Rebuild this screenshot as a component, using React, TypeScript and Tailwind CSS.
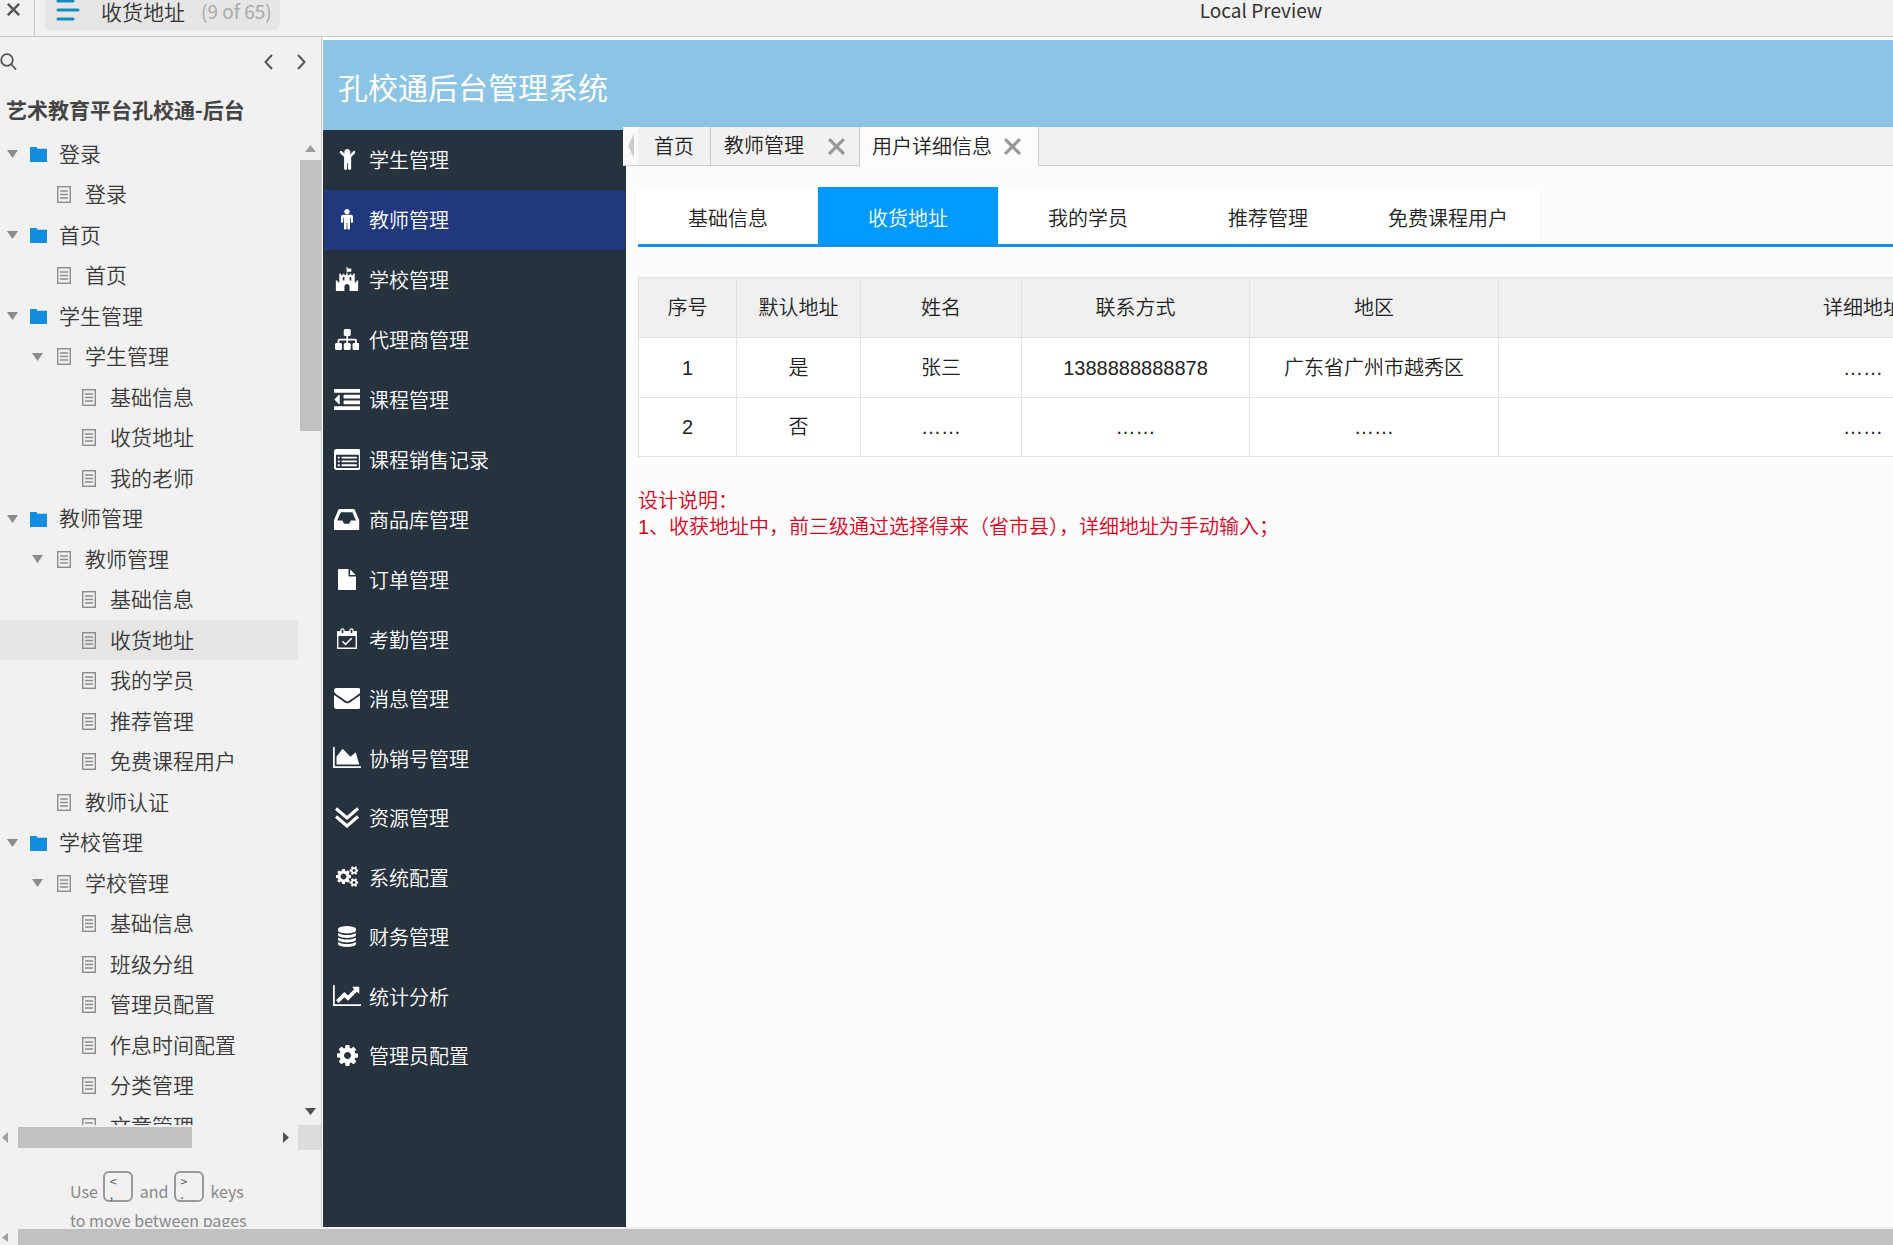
import type { ReactNode } from "react";
import { FaFortAwesome } from "react-icons/fa";

type TreeNode = {
  label: string;
  kind: "folder" | "page";
  level: 0 | 1 | 2;
  open?: boolean;
  active?: boolean;
};

const tree: TreeNode[] = [
  { label: "登录", kind: "folder", level: 0, open: true },
  { label: "登录", kind: "page", level: 1 },
  { label: "首页", kind: "folder", level: 0, open: true },
  { label: "首页", kind: "page", level: 1 },
  { label: "学生管理", kind: "folder", level: 0, open: true },
  { label: "学生管理", kind: "page", level: 1, open: true },
  { label: "基础信息", kind: "page", level: 2 },
  { label: "收货地址", kind: "page", level: 2 },
  { label: "我的老师", kind: "page", level: 2 },
  { label: "教师管理", kind: "folder", level: 0, open: true },
  { label: "教师管理", kind: "page", level: 1, open: true },
  { label: "基础信息", kind: "page", level: 2 },
  { label: "收货地址", kind: "page", level: 2, active: true },
  { label: "我的学员", kind: "page", level: 2 },
  { label: "推荐管理", kind: "page", level: 2 },
  { label: "免费课程用户", kind: "page", level: 2 },
  { label: "教师认证", kind: "page", level: 1 },
  { label: "学校管理", kind: "folder", level: 0, open: true },
  { label: "学校管理", kind: "page", level: 1, open: true },
  { label: "基础信息", kind: "page", level: 2 },
  { label: "班级分组", kind: "page", level: 2 },
  { label: "管理员配置", kind: "page", level: 2 },
  { label: "作息时间配置", kind: "page", level: 2 },
  { label: "分类管理", kind: "page", level: 2 },
  { label: "文章管理", kind: "page", level: 2 },
];

const indent = ["pl-[7px]", "pl-8", "pl-[57px]"];

function Glyph({ box, d }: { box: string; d: string }) {
  return (
    <svg viewBox={box} className="h-[21px] w-auto" fill="currentColor" aria-hidden="true">
      <path d={d} />
    </svg>
  );
}

const child =
  "M1468 452l-292 292v824q0 46-33 79t-79 33-79-33-33-79v-384h-64v384q0 46-33 79t-79 33-79-33-33-79v-824l-292-292q-28-28-28-68t28-68 68-28 68 28l228 228h368l228-228q28-28 68-28t68 28 28 68-28 68zm-348-68q0 93-65.5 158.5t-158.5 65.5-158.5-65.5-65.5-158.5 65.5-158.5 158.5-65.5 158.5 65.5 65.5 158.5z";
const male =
  "M1408 672v416q0 40-28 68t-68 28-68-28-28-68v-352h-64v912q0 46-33 79t-79 33-79-33-33-79v-464h-64v464q0 46-33 79t-79 33-79-33-33-79v-912h-64v352q0 40-28 68t-68 28-68-28-28-68v-416q0-80 56-136t136-56h640q80 0 136 56t56 136zm-288-448q0 93-65.5 158.5t-158.5 65.5-158.5-65.5-65.5-158.5 65.5-158.5 158.5-65.5 158.5 65.5 65.5 158.5z";
const sitemap =
  "M1792 1248v320q0 40-28 68t-68 28h-320q-40 0-68-28t-28-68v-320q0-40 28-68t68-28h96v-192h-512v192h96q40 0 68 28t28 68v320q0 40-28 68t-68 28h-320q-40 0-68-28t-28-68v-320q0-40 28-68t68-28h96v-192h-512v192h96q40 0 68 28t28 68v320q0 40-28 68t-68 28h-320q-40 0-68-28t-28-68v-320q0-40 28-68t68-28h96v-192q0-52 38-90t90-38h512v-192h-96q-40 0-68-28t-28-68v-320q0-40 28-68t68-28h320q40 0 68 28t28 68v320q0 40-28 68t-68 28h-96v192h512q52 0 90 38t38 90v192h96q40 0 68 28t28 68z";
const outdent =
  "M384 544v576q0 13-9.5 22.5t-22.5 9.5q-14 0-23-9l-288-288q-9-9-9-23t9-23l288-288q9-9 23-9 13 0 22.5 9.5t9.5 22.5zM32 1280h1728q32 0 32 32v192q0 32-32 32h-1728q-32 0-32-32v-192q0-32 32-32zM672 896h1088q32 0 32 32v192q0 32-32 32h-1088q-32 0-32-32v-192q0-32 32-32zM672 512h1088q32 0 32 32v192q0 32-32 32h-1088q-32 0-32-32v-192q0-32 32-32zM32 128h1728q32 0 32 32v192q0 32-32 32h-1728q-32 0-32-32v-192q0-32 32-32z";
const listAlt =
  "M256 1152h128v128h-128zM256 896h128v128h-128zM256 640h128v128h-128zM512 1152h1024v128h-1024zM512 896h1024v128h-1024zM512 640h1024v128h-1024zM1664 1376v-832q0-32-32-32h-1472q-32 0-32 32v832q0 32 32 32h1472q32 0 32-32zM1792 288v1088q0 66-47 113t-113 47h-1472q-66 0-113-47t-47-113v-1088q0-66 47-113t113-47h1472q66 0 113 47t47 113z";
const inbox =
  "M1151 960h316q-1-3-2.5-8.5t-2.5-7.5l-212-496h-708l-212 496q-1 3-2.5 8.5t-2.5 7.5h316l95 192h320zm513 30v482q0 26-19 45t-45 19h-1408q-26 0-45-19t-19-45v-482q0-62 25-123l238-552q10-25 36.5-42t52.5-17h832q26 0 52.5 17t36.5 42l238 552q25 61 25 123z";
const file =
  "M1152 512v-472q22 14 36 28l408 408q14 14 28 36h-472zm-128 32q0 40 28 68t68 28h544v1056q0 40-28 68t-68 28h-1344q-40 0-68-28t-28-68v-1600q0-40 28-68t68-28h800v544z";
const envelope =
  "M1792 710v794q0 66-47 113t-113 47h-1472q-66 0-113-47t-47-113v-794q44 49 101 87 362 246 497 345 57 42 92.5 65.5t94.5 48 110 24.5h2q51 0 110-24.5t94.5-48 92.5-65.5q170-123 498-345 57-39 100-87zm0-294q0 79-49 151t-122 123q-376 261-468 325-10 7-42.5 31t-54 38.5-52 32.5-57.5 27-50 9h-2q-23 0-50-9t-57.5-27-52-32.5-54-38.5-42.5-31q-91-64-262-182.5t-205-142.5q-62-42-117-115.5t-55-136.5q0-78 41.5-130t118.5-52h1472q65 0 112.5 47t47.5 113z";
const areaChart =
  "M2048 1536v128h-2048v-1536h128v1408h1920zm-384-1024l256 896h-1664v-576l448-576 576 576z";
const cogs =
  "M896 896q0-106-75-181t-181-75-181 75-75 181 75 181 181 75 181-75 75-181zm768 512q0-52-38-90t-90-38-90 38-38 90q0 53 37.5 90.5t90.5 37.5 90.5-37.5 37.5-90.5zm0-1024q0-52-38-90t-90-38-90 38-38 90q0 53 37.5 90.5t90.5 37.5 90.5-37.5 37.5-90.5zm-384 421v185q0 10-7 19.5t-16 10.5l-155 24q-11 35-32 76 34 48 90 115 7 11 7 20 0 12-7 19-23 30-82.5 89.5t-78.5 59.5q-11 0-21-7l-115-90q-37 19-77 31-11 108-23 155-7 24-30 24h-186q-11 0-20-7.5t-10-17.5l-23-153q-34-10-75-31l-118 89q-7 7-20 7-11 0-21-8-144-133-144-160 0-9 7-19 10-14 41-53t47-61q-23-44-35-82l-152-24q-10-1-17-9.5t-7-19.5v-185q0-10 7-19.5t16-10.5l155-24q11-35 32-76-34-48-90-115-7-11-7-20 0-12 7-20 22-30 82-89t79-59q11 0 21 7l115 90q34-18 77-32 11-108 23-154 7-24 30-24h186q11 0 20 7.5t10 17.5l23 153q34 10 75 31l118-89q8-7 20-7 11 0 21 8 144 133 144 160 0 8-7 19-12 16-42 54t-45 60q23 48 34 82l152 23q10 2 17 10.5t7 19.5zm640 533v140q0 16-149 31-12 27-30 52 51 113 51 138 0 4-4 7-122 71-124 71-8 0-46-47t-52-68q-20 2-30 2t-30-2q-14 21-52 68t-46 47q-2 0-124-71-4-3-4-7 0-25 51-138-18-25-30-52-149-15-149-31v-140q0-16 149-31 13-29 30-52-51-113-51-138 0-4 4-7 4-2 35-20t59-34 30-16q8 0 46 46.5t52 67.5q20-2 30-2t30 2q51-71 92-112l6-2q4 0 124 70 4 3 4 7 0 25-51 138 17 23 30 52 149 15 149 31zm0-1024v140q0 16-149 31-12 27-30 52 51 113 51 138 0 4-4 7-122 71-124 71-8 0-46-47t-52-68q-20 2-30 2t-30-2q-14 21-52 68t-46 47q-2 0-124-71-4-3-4-7 0-25 51-138-18-25-30-52-149-15-149-31v-140q0-16 149-31 13-29 30-52-51-113-51-138 0-4 4-7 4-2 35-20t59-34 30-16q8 0 46 46.5t52 67.5q20-2 30-2t30 2q51-71 92-112l6-2q4 0 124 70 4 3 4 7 0 25-51 138 17 23 30 52 149 15 149 31z";
const database =
  "M896 768q237 0 443-43t325-127v170q0 69-103 128t-280 93.5-385 34.5-385-34.5-280-93.5-103-128v-170q119 84 325 127t443 43zm0 768q237 0 443-43t325-127v170q0 69-103 128t-280 93.5-385 34.5-385-34.5-280-93.5-103-128v-170q119 84 325 127t443 43zm0-384q237 0 443-43t325-127v170q0 69-103 128t-280 93.5-385 34.5-385-34.5-280-93.5-103-128v-170q119 84 325 127t443 43zm0-1152q208 0 385 34.5t280 93.5 103 128v128q0 69-103 128t-280 93.5-385 34.5-385-34.5-280-93.5-103-128v-128q0-69 103-128t280-93.5 385-34.5z";
const lineChart =
  "M2048 1536v128h-2048v-1536h128v1408h1920zm-128-1248v435q0 21-19.5 29.5t-35.5-7.5l-121-121-633 633q-10 10-23 10t-23-10l-233-233-416 416-192-192 585-585q10-10 23-10t23 10l233 233 464-464-121-121q-16-16-7.5-35.5t29.5-19.5h435q14 0 23 9t9 23z";
const cog =
  "M1152 896q0-106-75-181t-181-75-181 75-75 181 75 181 181 75 181-75 75-181zm512-109v222q0 12-8 23t-20 13l-185 28q-19 54-39 91 35 50 107 138 10 12 10 25t-9 23q-27 37-99 108t-94 71q-12 0-26-9l-138-108q-44 23-91 38-16 136-29 186-7 28-36 28h-222q-14 0-24.5-8.5t-11.5-21.5l-28-184q-49-16-90-37l-141 107q-10 9-25 9-14 0-25-11-126-114-165-168-7-10-7-23 0-12 8-23 15-21 51-66.5t54-70.5q-27-50-41-99l-183-27q-13-2-21-12.5t-8-23.5v-222q0-12 8-23t19-13l186-28q14-46 39-92-40-57-107-138-10-12-10-24 0-10 9-23 26-36 98.5-107.5t94.5-71.5q13 0 26 10l138 107q44-23 91-38 16-136 29-186 7-28 36-28h222q14 0 24.5 8.5t11.5 21.5l28 184q49 16 90 37l142-107q9-9 24-9 13 0 25 10 129 119 165 170 7 8 7 22 0 12-8 23-15 21-51 66.5t-54 70.5q26 50 41 98l183 28q13 2 21 12.5t8 23.5z";

function CalendarCheck() {
  return (
    <svg viewBox="0 0 20 21" className="h-[21px] w-5" fill="none" stroke="currentColor" aria-hidden="true">
      <path d="M0 3h20v5H0z" fill="currentColor" stroke="none" />
      <path d="M.7 4v16.3h18.6V4" strokeWidth="1.4" />
      <rect x="4" y=".8" width="3" height="5" rx="1.5" fill="#27323f" strokeWidth="1.2" />
      <rect x="13" y=".8" width="3" height="5" rx="1.5" fill="#27323f" strokeWidth="1.2" />
      <path d="M5.5 13.3l3 3 6.2-6" strokeWidth="1.6" />
    </svg>
  );
}

function DoubleDown() {
  return (
    <svg viewBox="0 0 24 21" className="h-[21px] w-6" fill="none" stroke="currentColor" strokeWidth="3.2" aria-hidden="true">
      <path d="M1 1.5l11 9.5 11-9.5M1 9.5L12 19l11-9.5" />
    </svg>
  );
}

const upperMenu: { label: string; icon: ReactNode; active?: boolean }[] = [
  { label: "学生管理", icon: <Glyph box="296 160 1200 1520" d={child} /> },
  { label: "教师管理", icon: <Glyph box="384 0 1024 1792" d={male} />, active: true },
  { label: "学校管理", icon: <FaFortAwesome className="h-6 w-6" /> },
  { label: "代理商管理", icon: <Glyph box="0 128 1792 1536" d={sitemap} /> },
  { label: "课程管理", icon: <Glyph box="0 128 1792 1408" d={outdent} /> },
  { label: "课程销售记录", icon: <Glyph box="0 128 1792 1408" d={listAlt} /> },
  { label: "商品库管理", icon: <Glyph box="128 256 1536 1280" d={inbox} /> },
  { label: "订单管理", icon: <Glyph box="128 0 1536 1792" d={file} /> },
];

const lowerMenu: { label: string; icon: ReactNode }[] = [
  { label: "考勤管理", icon: <CalendarCheck /> },
  { label: "消息管理", icon: <Glyph box="0 256 1792 1408" d={envelope} /> },
  { label: "协销号管理", icon: <Glyph box="0 128 2048 1536" d={areaChart} /> },
  { label: "资源管理", icon: <DoubleDown /> },
  { label: "系统配置", icon: <Glyph box="0 0 1920 1792" d={cogs} /> },
  { label: "财务管理", icon: <Glyph box="128 0 1536 1792" d={database} /> },
  { label: "统计分析", icon: <Glyph box="0 128 2048 1536" d={lineChart} /> },
  { label: "管理员配置", icon: <Glyph box="128 128 1536 1536" d={cog} /> },
];

const subTabs = ["基础信息", "收货地址", "我的学员", "推荐管理", "免费课程用户"];

const columns = [
  { title: "序号", width: "w-[98px]" },
  { title: "默认地址", width: "w-[124px]" },
  { title: "姓名", width: "w-[161px]" },
  { title: "联系方式", width: "w-[228px]" },
  { title: "地区", width: "w-[249px]" },
  { title: "详细地址", width: "w-[729px]" },
];

const rows = [
  ["1", "是", "张三", "1388888888878", "广东省广州市越秀区", "……"],
  ["2", "否", "……", "……", "……", "……"],
];

function Triangle({ className, d }: { className: string; d: string }) {
  return (
    <svg viewBox="0 0 10 10" preserveAspectRatio="none" className={className} fill="currentColor" aria-hidden="true">
      <path d={d} />
    </svg>
  );
}

const UP = "M0 10L5 0l5 10z";
const DOWN = "M0 0h10L5 10z";
const LEFT = "M10 0v10L0 5z";
const RIGHT = "M0 0l10 5L0 10z";

function PageIcon() {
  return (
    <svg viewBox="0 0 14 17" className="h-[17px] w-3.5 shrink-0" fill="none" stroke="#8c8c8c" aria-hidden="true">
      <rect x=".7" y=".7" width="12.6" height="15.6" strokeWidth="1.4" />
      <path d="M3 5h8M3 8.5h8M3 12h8" strokeWidth="1.3" />
    </svg>
  );
}

function FolderIcon() {
  return (
    <svg viewBox="0 0 17 15" className="h-[15px] w-[17px] shrink-0" fill="#138ddd" aria-hidden="true">
      <path d="M0 0h6.5l1 1.7H17V15H0z" />
    </svg>
  );
}

function Cross({ className }: { className: string }) {
  return (
    <svg viewBox="0 0 16 16" className={className} fill="none" stroke="currentColor" aria-hidden="true">
      <path d="M1 1l14 14M15 1L1 15" strokeWidth="3" />
    </svg>
  );
}

function TopBar() {
  return (
    <header className="flex h-[37px] shrink-0 items-start border-b border-[#c8c8c8] bg-[#f1f1f1]">
      <button aria-label="关闭" className="flex h-9 w-[35px] items-start border-r border-[#c8c8c8] pt-[3px] pl-[7px] text-[#555]">
        <Cross className="h-[13px] w-[13px]" />
      </button>
      <button className="ml-2.5 flex h-[30px] w-[235px] items-center rounded-b-md bg-[#e6e6e6] pb-2 pl-[11px]">
        <svg viewBox="0 0 24 22" className="h-[22px] w-6" stroke="#138bc4" strokeWidth="3" strokeLinecap="round" aria-hidden="true">
          <path d="M2 1h15M2 10h20M2 19h15" />
        </svg>
        <span className="ml-[21px] text-[21px] leading-5 font-[350] text-[#333]">收货地址</span>
        <span className="ml-4 text-[19px] leading-5 text-[#aaa]">(9 of 65)</span>
      </button>
      <p className="mr-[571px] ml-auto text-[19px] leading-5 text-[#333]">Local Preview</p>
    </header>
  );
}

function Key({ top, bottom }: { top: string; bottom: string }) {
  return (
    <kbd className="ml-[5px] flex h-[31px] w-[30px] flex-col rounded-md border-2 border-[#999] pt-px pl-[5px] font-[inherit] text-xs text-[#555]">
      <span className="leading-[13px]">{top}</span>
      <span className="leading-[13px]">{bottom}</span>
    </kbd>
  );
}

function PageTree() {
  return (
    <aside className="flex w-[322px] shrink-0 flex-col overflow-hidden border-r border-[#c9cbd3] bg-[#f1f1f1]">
      <div className="flex h-[49px] shrink-0 items-center pr-[15px] text-[#555]">
        <button aria-label="搜索">
          <svg viewBox="0 0 17 17" className="h-[17px] w-[17px]" fill="none" stroke="currentColor" strokeWidth="1.8">
            <circle cx="7" cy="7" r="5.8" />
            <path d="M11 11l5 5.5" />
          </svg>
        </button>
        <button aria-label="上一页" className="ml-auto">
          <svg viewBox="0 0 9 16" className="h-4 w-[9px]" fill="none" stroke="currentColor" strokeWidth="2">
            <path d="M8 1L1.5 8 8 15" />
          </svg>
        </button>
        <button aria-label="下一页" className="ml-6">
          <svg viewBox="0 0 9 16" className="h-4 w-[9px]" fill="none" stroke="currentColor" strokeWidth="2">
            <path d="M1 1l6.5 7L1 15" />
          </svg>
        </button>
      </div>
      <h1 className="h-12 shrink-0 pl-1.5 text-[21px] leading-[47px] font-bold text-[#444]">
        艺术教育平台孔校通-后台
      </h1>

      <div className="flex min-h-0 flex-1">
        <ul className="min-w-0 flex-1 overflow-hidden">
          {tree.map((node, i) => (
            <li key={i} className="odd:h-10 even:h-[41px]">
              <a
                href="#"
                className={`flex h-full items-center text-[21px] leading-10 font-[350] whitespace-nowrap text-[#3a3a3a] ${indent[node.level]} ${
                  node.active ? "bg-[#e6e6e6]" : ""
                }`}
              >
                <span className="w-[25px] shrink-0 text-[#8c8c8c]">
                  {node.open && <Triangle className="h-2 w-[11px]" d={DOWN} />}
                </span>
                {node.kind === "folder" ? (
                  <>
                    <span className="-ml-0.5 w-[29px] shrink-0 pt-px">
                      <FolderIcon />
                    </span>
                    <span className="pb-[3px]">{node.label}</span>
                  </>
                ) : (
                  <>
                    <PageIcon />
                    <span className="ml-3.5 pb-[3px]">{node.label}</span>
                  </>
                )}
              </a>
            </li>
          ))}
        </ul>
        <div className="flex w-[23px] shrink-0 flex-col items-center pt-[11px] pb-2.5 pl-0.5">
          <Triangle className="h-[7px] w-[11px] text-[#a0a0a0]" d={UP} />
          <div className="mt-2 h-[271px] w-full bg-[#c1c1c1]" />
          <Triangle className="mt-auto h-[7px] w-[11px] text-[#505050]" d={DOWN} />
        </div>
      </div>

      <div className="flex h-[25px] shrink-0 items-center">
        <Triangle className="ml-0.5 h-[11px] w-1.5 text-[#a0a0a0]" d={LEFT} />
        <div className="ml-2.5 h-[21px] w-[174px] bg-[#c1c1c1]" />
        <Triangle className="mr-[9px] ml-auto h-[11px] w-1.5 text-[#505050]" d={RIGHT} />
        <div className="h-full w-[23px] bg-[#dcdcdc]" />
      </div>

      <div className="h-[77px] shrink-0 overflow-hidden pt-[21px] pl-[70px] text-base leading-6 whitespace-nowrap text-[#888]">
        <div className="flex h-8 items-start">
          <span className="pt-2">Use</span>
          <Key top="<" bottom="," />
          <span className="ml-[7px] pt-2">and</span>
          <Key top=">" bottom="." />
          <span className="ml-[7px] pt-2">keys</span>
        </div>
        <p className="pt-[5px]">to move between pages</p>
      </div>
    </aside>
  );
}

function MenuItem({ label, icon, active }: { label: string; icon: ReactNode; active?: boolean }) {
  return (
    <a
      href="#"
      className={`mx-px flex h-full items-center pt-0.5 pl-[9px] text-xl font-[350] text-white ${active ? "bg-[#21387f]" : ""}`}
    >
      <span className="flex w-7 shrink-0 justify-center pb-1">{icon}</span>
      <span className="ml-2 leading-6">{label}</span>
    </a>
  );
}

function MainMenu() {
  return (
    <nav className="w-[303px] shrink-0 border-t-[3px] border-[#8bc4e4] bg-[#27323f]">
      <ul>
        {upperMenu.map((item) => (
          <li key={item.label} className="h-[60px]">
            <MenuItem {...item} />
          </li>
        ))}
      </ul>
      <ul>
        {lowerMenu.map((item) => (
          <li key={item.label} className="odd:h-[59px] even:h-[60px]">
            <MenuItem {...item} />
          </li>
        ))}
      </ul>
    </nav>
  );
}

function Content() {
  return (
    <main className="relative min-w-0 flex-1 bg-[#fcfcfc] text-xl font-[350] text-[#222]">
      <button
        aria-label="收起菜单"
        className="absolute top-0 -left-[3px] flex h-[39px] w-[15px] items-center justify-center border-b border-[#ccc] bg-[#fafafa] text-[#ccc]"
      >
        <Triangle className="h-6 w-1.5" d={LEFT} />
      </button>

      <div className="flex h-[39px] bg-[#f1f1f1] pl-[11px] leading-10">
        <button className="w-[74px] border-x border-b border-[#ccc]">首页</button>
        <div className="flex w-[148px] items-center border-b border-[#ccc] pl-[13px]">
          <button>教师管理</button>
          <button aria-label="关闭教师管理" className="ml-6 text-[#999]">
            <Cross className="h-[17px] w-[17px]" />
          </button>
        </div>
        <div className="flex w-[180px] items-center border-x border-[#ccc] bg-[#fdfdfd] pl-3">
          <button>用户详细信息</button>
          <button aria-label="关闭用户详细信息" className="ml-3 text-[#999]">
            <Cross className="h-[17px] w-[17px]" />
          </button>
        </div>
        <div className="flex-1 border-b border-[#ccc]" />
      </div>

      <div className="pt-[21px] pl-3">
        <div className="flex border-b-[3px] border-[#1690ea]">
          {subTabs.map((tab) => (
            <button
              key={tab}
              className={`h-[57px] w-[180px] pt-1.5 ${tab === "收货地址" ? "bg-[#0099ff] text-white" : "bg-white"}`}
            >
              {tab}
            </button>
          ))}
        </div>

        <div className="mt-[30px] overflow-hidden">
          <table className="w-[1589px] table-fixed border-collapse bg-white text-center leading-6">
            <thead>
              <tr className="h-[60px] bg-[#f0f0f0]">
                {columns.map((col) => (
                  <th key={col.title} className={`border border-[#e2e2e2] font-[350] ${col.width}`}>
                    {col.title}
                  </th>
                ))}
              </tr>
            </thead>
            <tbody>
              {rows.map((row) => (
                <tr key={row[0]} className="h-[60px] last:h-[59px]">
                  {row.map((cell, i) => (
                    <td key={i} className="border border-[#e2e2e2]">
                      {cell}
                    </td>
                  ))}
                </tr>
              ))}
            </tbody>
          </table>
        </div>

        <div className="mt-[31px] leading-[26px] text-[#d9001b]">
          <p>设计说明：</p>
          <p>1、收获地址中，前三级通过选择得来（省市县），详细地址为手动输入；</p>
        </div>
      </div>
    </main>
  );
}

export default function App() {
  return (
    <div className="flex h-screen flex-col overflow-hidden bg-[#f1f1f1] font-['Noto_Sans_CJK_SC',sans-serif]">
      <TopBar />
      <div className="flex min-h-0 flex-1">
        <PageTree />
        <div className="flex min-w-0 flex-1 flex-col border-t-[3px] border-l border-white font-['Liberation_Sans','Noto_Sans_CJK_SC',sans-serif]">
          <div className="h-[87px] shrink-0 bg-[#8bc4e4] pl-[15px] text-3xl leading-[98px] text-white">
            孔校通后台管理系统
          </div>
          <div className="flex min-h-0 flex-1">
            <MainMenu />
            <Content />
          </div>
        </div>
      </div>
      <div className="flex h-[18px] shrink-0 items-end pt-0.5">
        <Triangle className="mb-[3px] ml-0.5 h-[9px] w-1.5 text-[#a0a0a0]" d={LEFT} />
        <div className="ml-2.5 h-4 flex-1 bg-[#c1c1c1]" />
      </div>
    </div>
  );
}
